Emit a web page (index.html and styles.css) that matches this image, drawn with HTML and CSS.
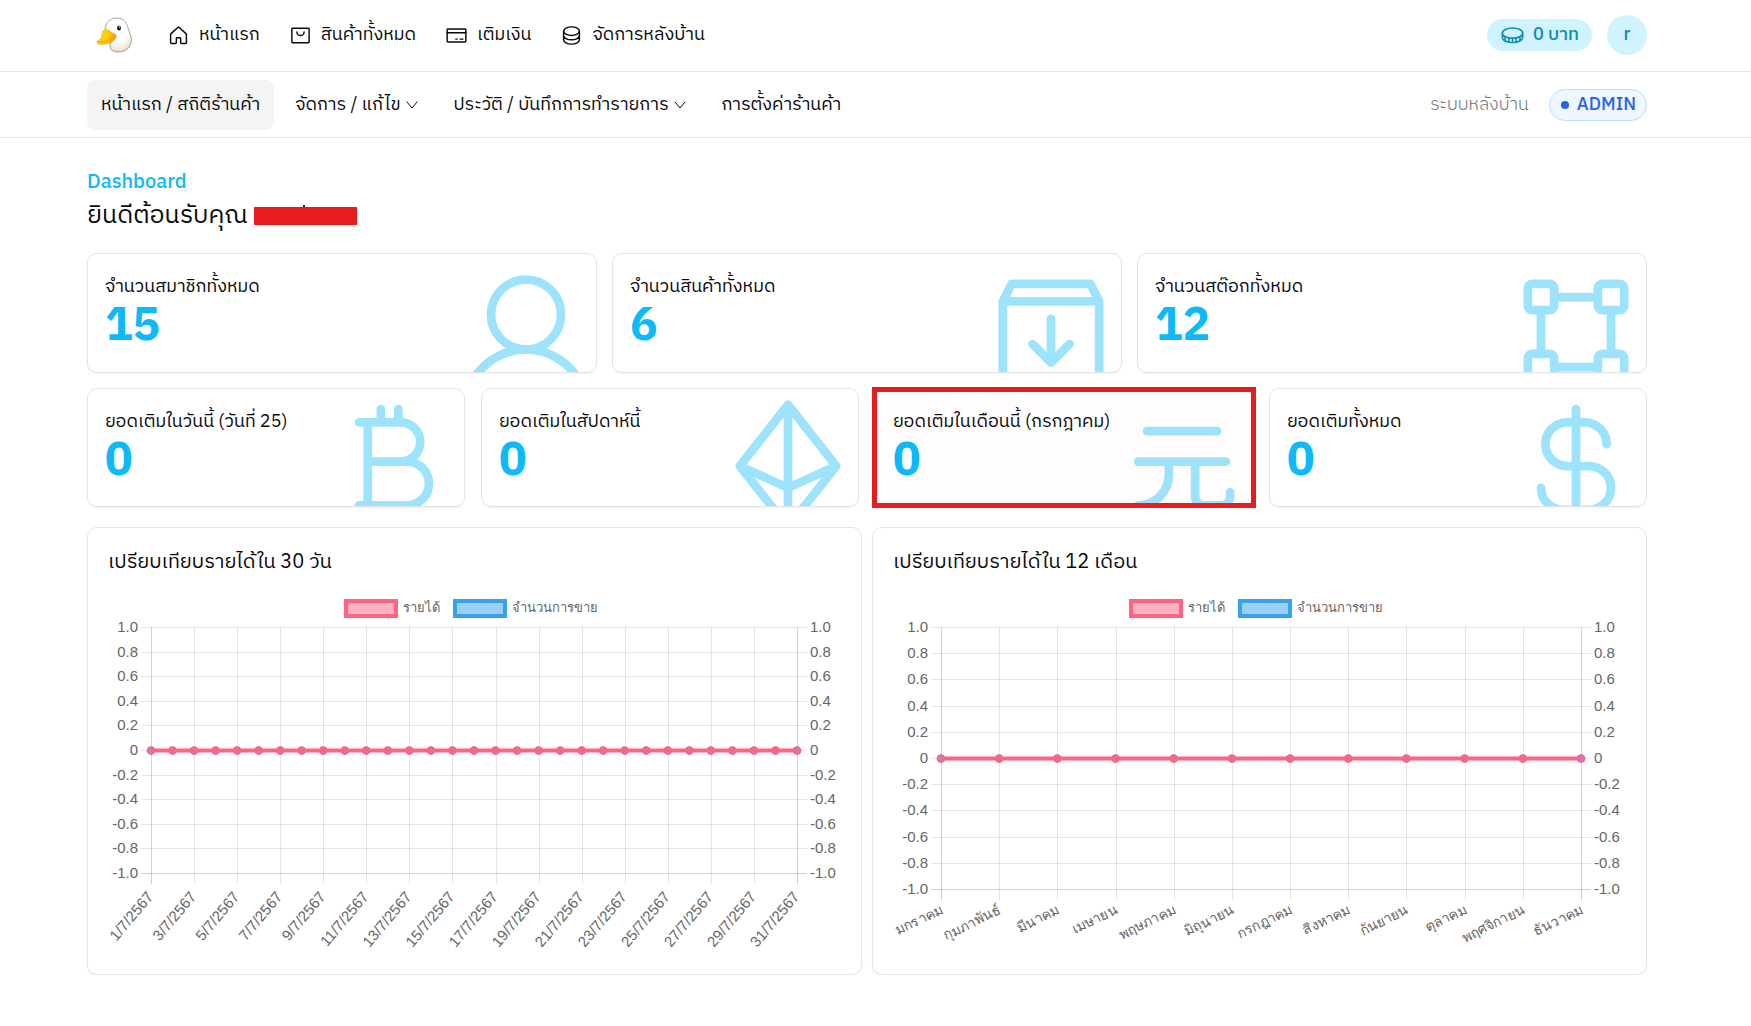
FILE: index.html
```html
<!DOCTYPE html>
<html lang="th">
<head>
<meta charset="utf-8">
<meta name="viewport" content="width=device-width, initial-scale=1">
<title>ระบบหลังบ้าน</title>
<link rel="stylesheet" href="styles.css">
</head>
<body>
<header class="topbar">
  <div class="container bar">
    <a class="logo" href="#" aria-label="หน้าแรก">
      <svg width="38" height="38" viewBox="0 0 38 38">
        <defs>
          <radialGradient id="head" cx="0.5" cy="0.35" r="0.7">
            <stop offset="0.5" stop-color="#fff"/><stop offset="0.85" stop-color="#f0e4d4"/><stop offset="1" stop-color="#c9a77c"/>
          </radialGradient>
          <linearGradient id="beak" x1="0" y1="0" x2="1" y2="0.3">
            <stop offset="0" stop-color="#ffe11c"/><stop offset="0.7" stop-color="#fdc400"/><stop offset="1" stop-color="#f39a1e"/>
          </linearGradient>
        </defs>
        <path d="M10 13C11 6 15 2 22 2c8 0 10 6 12 13 2 5 3 7 2 12-1 6-7 9-13 9-5 0-8-2-8-6 0-3 2-5 1-7Z" fill="url(#head)" stroke="#aaa7a4"/>
        <path d="M9 14c3-1 6 0 8 3 3 0 5 2 4 4-1 4-6 7-11 7-5 1-8 0-8-2 0-1 1-2 2-2 2-1 3-3 3-6 0-2 1-3 2-4Z" fill="url(#beak)" stroke="#cfae3a" stroke-width=".6"/>
        <path d="M3 26c5 0 10-1 14-4" fill="none" stroke="#e3950f" stroke-width=".8"/>
        <ellipse cx="24" cy="12" rx="2" ry="2.600" fill="#161616"/><circle cx="24.500" cy="11" r=".7" fill="#fff"/>
      </svg>
    </a>
    <nav class="mainnav">
      <a href="#"><svg class="ico" viewBox="0 0 256 256"><path d="M152 208v-48a8 8 0 0 0-8-8h-32a8 8 0 0 0-8 8v48a8 8 0 0 1-8 8H48a8 8 0 0 1-8-8v-92.500a8 8 0 0 1 2.600-5.900l80-72.700a8 8 0 0 1 10.800 0l80 72.700a8 8 0 0 1 2.600 5.900V208a8 8 0 0 1-8 8h-48a8 8 0 0 1-8-8Z"/></svg>หน้าแรก</a>
      <a href="#"><svg class="ico" viewBox="0 0 256 256"><rect x="32" y="48" width="192" height="160" rx="8"/><path d="M168 88a40 40 0 0 1-80 0"/></svg>สินค้าทั้งหมด</a>
      <a href="#"><svg class="ico" viewBox="0 0 256 256"><rect x="24" y="56" width="208" height="144" rx="8"/><path d="M24 97h208M168 168h32M120 168h16"/></svg>เติมเงิน</a>
      <a href="#"><svg class="ico" viewBox="0 0 256 256"><ellipse cx="128" cy="80" rx="88" ry="48"/><path d="M40 80v48c0 26.500 39.400 48 88 48s88-21.500 88-48V80M40 128v48c0 26.500 39.400 48 88 48s88-21.500 88-48v-48"/></svg>จัดการหลังบ้าน</a>
    </nav>
    <div class="account">
      <a class="balance" href="#"><svg class="coin" viewBox="0 0 256 256"><ellipse cx="128" cy="104" rx="104" ry="52"/><path d="M24 104v44c0 29 42 52 104 52s104-23 104-52v-44M92 154v42M164 154v42M128 156v44M52 144v36M204 144v36"/></svg>0 บาท</a>
      <button class="avatar" type="button">r</button>
    </div>
  </div>
</header>
<div class="subbar">
  <div class="container bar">
    <nav class="subnav">
      <a class="active" href="#">หน้าแรก / สถิติร้านค้า</a>
      <button type="button">จัดการ / แก้ไข<svg class="caret" viewBox="0 0 12 12"><path d="M1 3l5 6 5-6"/></svg></button>
      <button type="button">ประวัติ / บันทึกการทำรายการ<svg class="caret" viewBox="0 0 12 12"><path d="M1 3l5 6 5-6"/></svg></button>
      <a href="#">การตั้งค่าร้านค้า</a>
    </nav>
    <div class="role"><span class="muted">ระบบหลังบ้าน</span><span class="badge"><i class="dot"></i>ADMIN</span></div>
  </div>
</div>
<main class="container">
  <p class="eyebrow">Dashboard</p>
  <h1 class="welcome">ยินดีต้อนรับคุณ <span class="redacted"></span></h1>
  <section class="grid three">
    <article class="card stat"><h2>จำนวนสมาชิกทั้งหมด</h2><strong>15</strong>
      <svg class="art" viewBox="0 0 256 256"><g><circle cx="128" cy="96" r="64"/><path d="M31 216a112 112 0 0 1 194 0"/></g></svg></article>
    <article class="card stat"><h2>จำนวนสินค้าทั้งหมด</h2><strong>6</strong>
      <svg class="art" viewBox="0 0 256 256"><g><path d="M40 72v144h176V72L200 40H56ZM40 72h176M128 104v80M94 150l34 34 34-34"/></g></svg></article>
    <article class="card stat"><h2>จำนวนสต๊อกทั้งหมด</h2><strong>12</strong>
      <svg class="art" viewBox="0 0 256 256"><g><rect x="40" y="40" width="48" height="48" rx="8"/><rect x="168" y="40" width="48" height="48" rx="8"/><rect x="40" y="168" width="48" height="48" rx="8"/><rect x="168" y="168" width="48" height="48" rx="8"/><path d="M88 64h80M88 192h80M64 88v80M192 88v80"/></g></svg></article>
  </section>
  <section class="grid four">
    <article class="card stat"><h2>ยอดเติมในวันนี้ (วันที่ 25)</h2><strong>0</strong>
      <svg class="art" viewBox="0 0 256 256"><g><path d="M64 48h76a36 36 0 0 1 0 72H80M140 120h12a40 40 0 0 1 0 80H64M80 48v152M104 48V24M136 48V24"/></g></svg></article>
    <article class="card stat"><h2>ยอดเติมในสัปดาห์นี้</h2><strong>0</strong>
      <svg class="art" viewBox="0 0 256 256"><g><path d="M40 128 128 16l88 112-88 112ZM40 128l88 40 88-40M128 16v224"/></g></svg></article>
    <article class="card stat marked"><h2>ยอดเติมในเดือนนี้ (กรกฎาคม)</h2><strong>0</strong>
      <svg class="art" viewBox="0 0 256 256"><g><path d="M64 64h128M48 120h160M104 120v24a56 56 0 0 1-56 56M152 120v64a16 16 0 0 0 16 16h32a16 16 0 0 0 16-16v-8"/></g></svg></article>
    <article class="card stat"><h2>ยอดเติมทั้งหมด</h2><strong>0</strong>
      <svg class="art" viewBox="0 0 256 256"><g><path d="M128 24v208M184 88a40 40 0 0 0-40-40h-32a40 40 0 0 0 0 80h40a40 40 0 0 1 0 80h-48a40 40 0 0 1-40-40"/></g></svg></article>
  </section>
  <section class="charts">
    <article class="card panel"><h2>เปรียบเทียบรายได้ใน 30 วัน</h2><div class="chart" id="daily"></div></article>
    <article class="card panel"><h2>เปรียบเทียบรายได้ใน 12 เดือน</h2><div class="chart" id="monthly"></div></article>
  </section>
</main>
<script src="charts.js"></script>
</body>
</html>
```
FILE: styles.css
```css
* { box-sizing: border-box; }
body {
  margin: 0;
  padding-right: 17px;
  background: #fff;
  color: #09090b;
  font: 400 18px/28px "IBM Plex Sans Thai", "Noto Sans Thai", "Noto Sans", sans-serif;
}
a { color: inherit; text-decoration: none; }
button { border: 0; background: none; color: inherit; font: inherit; cursor: pointer; }
h1, h2, p { margin: 0; font-weight: 400; }
.container { max-width: 1560px; margin: 0 auto; }
.bar { display: flex; align-items: center; justify-content: space-between; }

.topbar, .subbar { margin-right: -17px; padding-right: 17px; border-bottom: 1px solid #e4e4e7; }
.topbar .bar { height: 71px; padding: 0 0 1px 8px; }
.logo { display: flex; margin-right: 34px; }
.mainnav { display: flex; flex: 1; gap: 29px; }
.mainnav a { display: flex; align-items: center; gap: 9px; }
.ico { width: 23px; height: 23px; }
.ico, .coin, .caret { fill: none; stroke: currentColor; stroke-width: 16; stroke-linecap: round; stroke-linejoin: round; }
.account { display: flex; align-items: center; gap: 15px; color: #0e8bb3; font-weight: 500; }
.balance { display: flex; align-items: center; gap: 8px; height: 32px; padding: 0 13px; border-radius: 16px; background: #cff3ff; }
.coin { width: 25px; height: 25px; }
.avatar { width: 40px; height: 40px; padding: 0; border-radius: 50%; background: #cff3ff; }

.subbar .bar { height: 65px; }
.subnav { display: flex; gap: 7px; }
.subnav > * { display: flex; align-items: center; gap: 6px; height: 50px; padding: 0 14px; border-radius: 8px; }
.subnav .active { background: #f4f4f5; }
.caret { width: 12px; height: 12px; stroke-width: 1; }
.role { display: flex; align-items: center; gap: 20px; }
.muted { color: #71717a; font-weight: 300; }
.badge { display: flex; align-items: center; gap: 8px; height: 32px; padding: 0 10px 0 11px; border: 1px solid #bfdbfe; border-radius: 16px; background: #eff6ff; color: #2563eb; font-weight: 500; }
.dot { width: 8px; height: 8px; border-radius: 50%; background: currentColor; }

.eyebrow { margin-top: 31px; color: #0db9f7; font-size: 20px; font-weight: 500; }
.welcome { display: flex; align-items: center; gap: 6px; margin-bottom: 18px; font-size: 25px; line-height: 38px; }
.redacted { position: relative; width: 103px; height: 18px; background: #e81c1c; }
.redacted::before { content: ""; position: absolute; left: 49px; bottom: 100%; width: 2px; height: 2px; background: #27272a; }

.grid { display: grid; gap: 15px; margin-bottom: 15px; }
.three { grid-template-columns: repeat(3, 1fr); }
.four { grid-template-columns: repeat(4, 1fr); column-gap: 16px; margin-bottom: 20px; }
.card { border: 1px solid #e4e4e7; border-radius: 10px; background: #fff; box-shadow: 0 1px 2px rgba(0, 0, 0, .05); }
.stat { position: relative; height: 119px; padding: 19px 17px; overflow: hidden; }
.three .stat { height: 120px; }
.stat h2 { font-size: 18px; }
.stat strong { display: block; color: #0db9f7; font-size: 46px; line-height: 53px; font-weight: 700; }
.art { position: absolute; top: 7px; right: 0; width: 140px; height: 140px; fill: none; stroke: #0db9f7; stroke-width: 16; stroke-linecap: round; stroke-linejoin: round; }
.three .art { top: 8px; }
.art g { opacity: .4; }

.marked { overflow: visible; background: #fffcfd; clip-path: inset(-1px -3px); }
.marked::after { content: ""; position: absolute; z-index: 1; inset: -2px -4px; border: 5px solid #e81c1c; }

.charts { display: grid; grid-template-columns: 1fr 1fr; gap: 10px; }
.panel { padding: 20px; min-width: 0; }
.panel h2 { font-size: 20px; line-height: 30px; }
.chart { height: 358px; margin-top: 18px; }
.chart svg { display: block; width: 100%; height: 100%; font: 15px "Liberation Sans", sans-serif; fill: #666; overflow: visible; }
.chart .key { font-size: 13px; }
.chart .month { font-size: 14px; }
```
FILE: charts.js
```js
// Dual-axis line charts: revenue and number of sales, both flat at zero.
function drawChart(id, labels, opts) {
  const host = document.getElementById(id);
  const w = host.clientWidth, h = host.clientHeight;
  const left = opts.left, right = w - opts.right, top = 31, bottom = opts.bottom;
  const mid = (top + bottom) / 2 + 0.5;
  const parts = [];
  const line = (x1, y1, x2, y2, a) =>
    parts.push(`<line x1="${x1}" y1="${y1}" x2="${x2}" y2="${y2}" stroke="rgba(0,0,0,${a})"/>`);
  const snap = v => Math.round(v) + 0.5;

  // legend
  const lx = Math.round(w / 2) - 131;
  const swatch = (x, c) =>
    parts.push(`<rect x="${x + 2}" y="5" width="50" height="15" fill="${c}" fill-opacity=".5" stroke="${c}" stroke-width="4"/>`);
  swatch(lx, '#ff6384');
  swatch(lx + 109, '#36a2eb');
  parts.push(`<text class="key" x="${lx + 59}" y="16">รายได้</text><text class="key" x="${lx + 168}" y="16">จำนวนการขาย</text>`);

  // horizontal grid with both value axes
  for (let i = 0; i <= 10; i++) {
    const v = (10 - 2 * i) / 10;
    const t = v === 0 ? '0' : v.toFixed(1);
    const y = top + (bottom - top) * i / 10;
    line(left - 10, snap(y), right + 10, snap(y), i === 10 ? .18 : .1);
    parts.push(`<text x="${left - 13}" y="${Math.round(y) + 5}" text-anchor="end">${t}</text><text x="${right + 13}" y="${Math.round(y) + 5}">${t}</text>`);
  }

  // vertical grid, rotated labels and points
  const n = labels.length - 1;
  let dots = '';
  labels.forEach((label, i) => {
    const x = left + (right - left) * i / n;
    dots += `<circle cx="${x}" cy="${mid}" r="3.75" fill="#c283b6" stroke="#ee5f8e" stroke-width="1.25"/>`;
    if (i % opts.step) return;
    line(snap(x), top, snap(x), bottom + 11, i === 0 || i === n ? .18 : .1);
    parts.push(`<text class="${opts.labelClass}" text-anchor="end" transform="translate(${x + 3} ${bottom + 24}) rotate(${opts.angle})">${label}</text>`);
  });
  parts.push(dots, `<line x1="${left}" y1="${mid}" x2="${right}" y2="${mid}" stroke="#ff6384" stroke-width="4"/>`);
  host.innerHTML = `<svg viewBox="0 0 ${w} ${h}">${parts.join('')}</svg>`;
}

const days = Array.from({ length: 31 }, (_, i) => `${i + 1}/7/2567`);
const months = ['มกราคม', 'กุมภาพันธ์', 'มีนาคม', 'เมษายน', 'พฤษภาคม', 'มิถุนายน', 'กรกฎาคม', 'สิงหาคม', 'กันยายน', 'ตุลาคม', 'พฤศจิกายน', 'ธันวาคม'];

function draw() {
  drawChart('daily', days, { left: 43, right: 44, bottom: 277, step: 2, angle: -50, labelClass: 'date' });
  drawChart('monthly', months, { left: 48, right: 45, bottom: 293, step: 1, angle: -26, labelClass: 'month' });
}
draw();
window.addEventListener('resize', draw);
```
